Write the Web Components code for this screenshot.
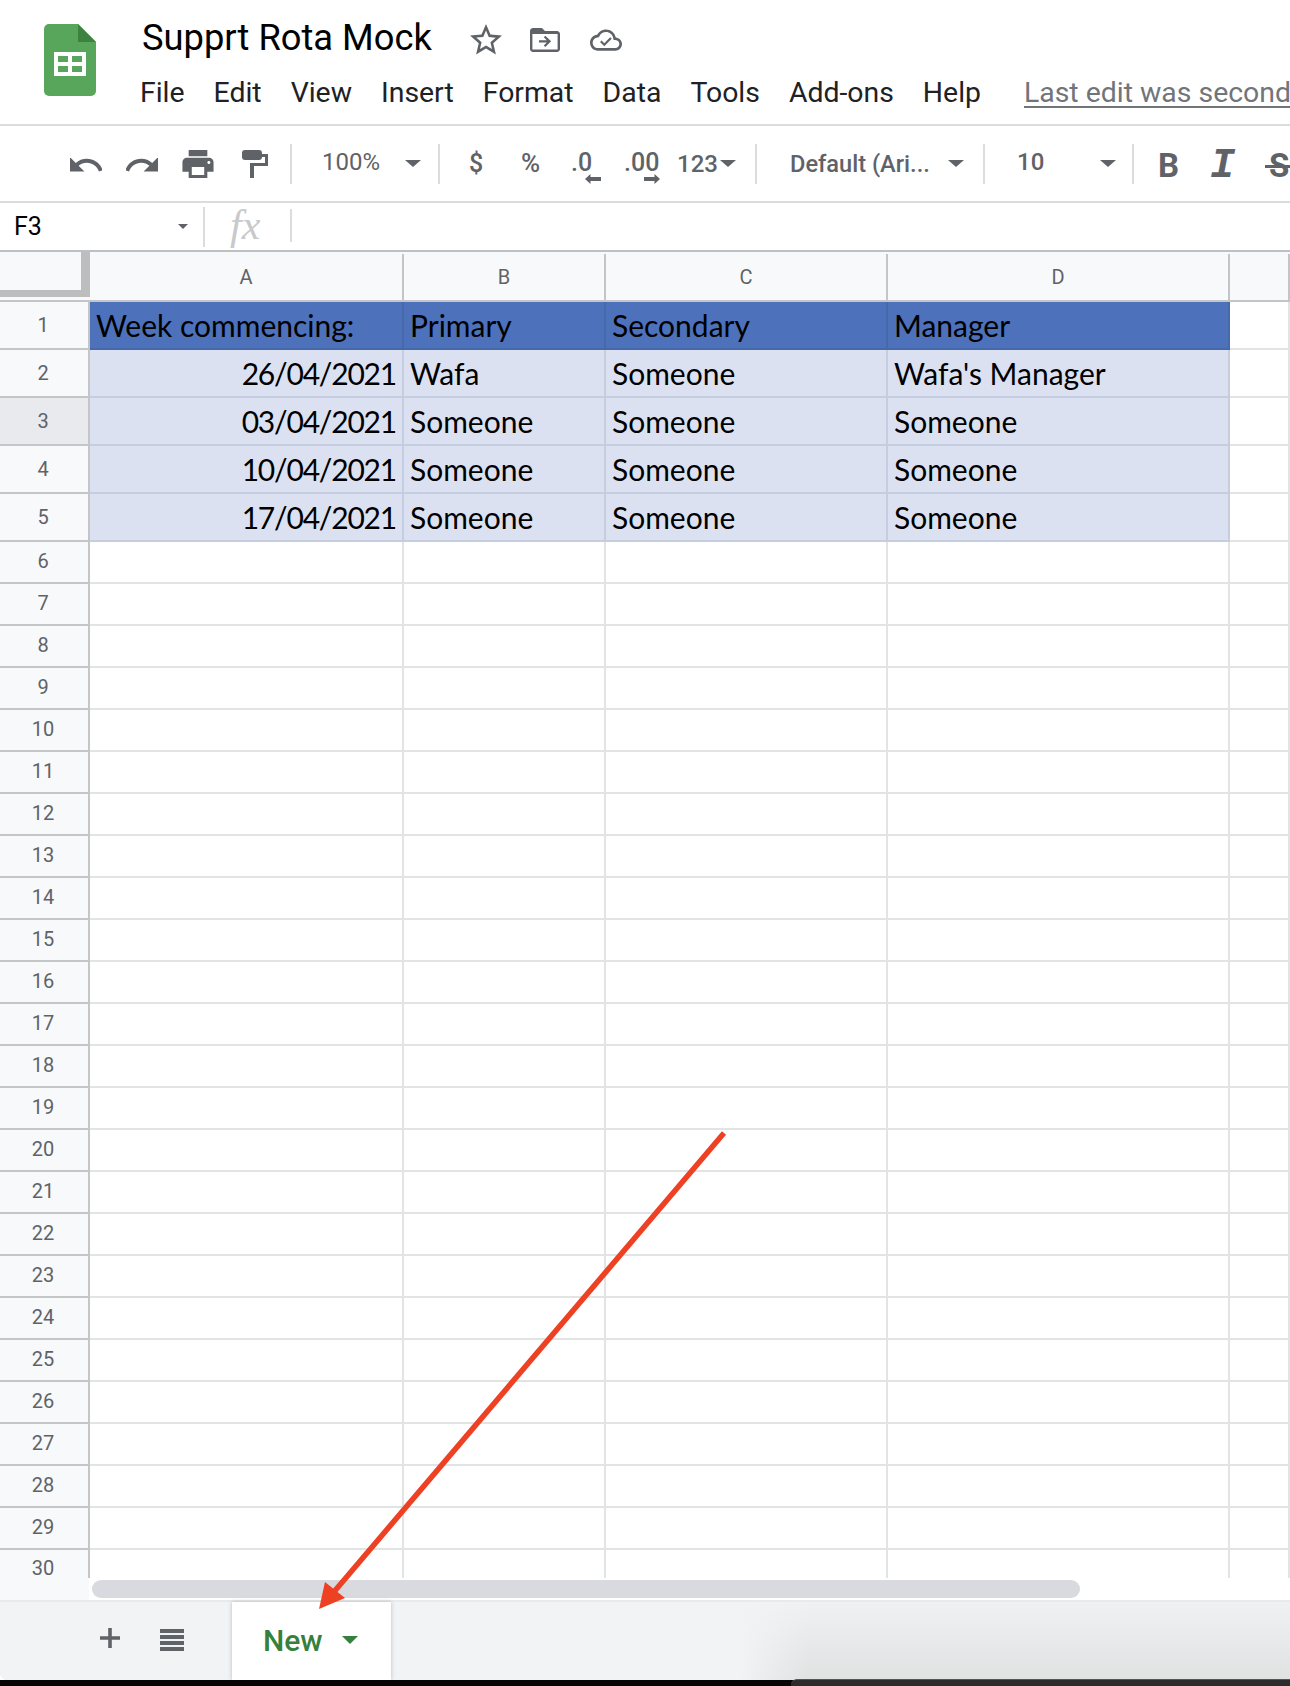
<!doctype html>
<html><head><meta charset="utf-8"><style>
html,body{margin:0;padding:0;background:#000}
body{font-family:Roboto,"Liberation Sans",sans-serif}
</style></head><body>
<sheet-app>
  <sheet-header slot="header" title-text="Supprt Rota Mock">
    <menu-item>File</menu-item><menu-item style="margin-left:29px">Edit</menu-item><menu-item style="margin-left:29px">View</menu-item><menu-item style="margin-left:29px">Insert</menu-item><menu-item style="margin-left:29px">Format</menu-item><menu-item style="margin-left:29px">Data</menu-item><menu-item style="margin-left:29px">Tools</menu-item><menu-item style="margin-left:29px">Add-ons</menu-item><menu-item style="margin-left:29px">Help</menu-item>
  </sheet-header>
  <sheet-toolbar slot="toolbar"></sheet-toolbar>
  <sheet-formula slot="formula"></sheet-formula>
  <sheet-grid slot="grid"></sheet-grid>
  <sheet-scroll slot="scroll"></sheet-scroll>
  <sheet-tabs slot="tabs"></sheet-tabs>
  <sheet-arrow slot="overlay"></sheet-arrow>
</sheet-app>
<script>
function def(name,html){customElements.define(name,class extends HTMLElement{constructor(){super();this.attachShadow({mode:'open'}).innerHTML=html}})}

def('sheet-app',`<style>:host{display:flex;flex-direction:column;position:relative;width:1290px;height:1686px;overflow:hidden;background:#fff;color:#000}
.end{height:6px;background:#050505;position:relative;flex:none}
.end i{position:absolute;left:791px;right:0;top:-1px;bottom:0;background:#2a2b2a;border-top:1px solid #555;border-top-left-radius:6px;box-sizing:border-box}</style>
<slot name="header"></slot><slot name="toolbar"></slot><slot name="formula"></slot><slot name="grid"></slot><slot name="scroll"></slot><slot name="tabs"></slot><div class="end"><i></i></div><slot name="overlay"></slot>`);

def('menu-item',`<style>:host{display:block;font-size:28.4px;line-height:32px;color:#202124;white-space:nowrap}</style><slot></slot>`);

customElements.define('sheet-header',class extends HTMLElement{constructor(){super();this.attachShadow({mode:'open'}).innerHTML=`<style>
:host{display:flex;height:124px;border-bottom:2px solid #dadce0;box-sizing:content-box;overflow:hidden;position:relative}
.logo{width:52px;height:72px;margin:24px 0 0 44px;flex:none}
.col{margin-left:44px;flex:1;min-width:0}
.t{display:flex;align-items:center;height:76px;padding-top:0}
h1{margin:0 0 0 2px;font:400 36.3px/44px Roboto,sans-serif;color:#000;white-space:nowrap;width:328px;flex:none}
.t svg{display:block;flex:none;fill:#5f6368}
.m{display:flex;align-items:center;margin-top:1px;white-space:nowrap}
.last{margin-left:43px;font-size:28.4px;line-height:32px;color:#70757a;text-decoration:underline;text-decoration-thickness:2px;text-underline-offset:4px}
</style>
<svg class="logo" viewBox="0 0 52 72"><path d="M5 0H34L52 18V67a5 5 0 0 1-5 5H5a5 5 0 0 1-5-5V5a5 5 0 0 1 5-5z" fill="#58a55c"/><path d="M34 0L52 18H34z" fill="#3e8241"/><path d="M10 28H42V52H10z" fill="#fff"/><path d="M14 32H24V38H14zM28 32H38V38H28zM14 42H24V48H14zM28 42H38V48H28z" fill="#58a55c"/></svg>
<div class="col"><div class="t"><h1>${this.getAttribute('title-text')}</h1>
<svg width="32" height="32" viewBox="2 2 20 20" style="margin-top:4px"><path d="M22 9.24l-7.19-.62L12 2 9.19 8.63 2 9.24l5.46 4.73L5.82 21 12 17.27 18.18 21l-1.63-7.03L22 9.24zM12 15.4l-3.76 2.27 1-4.28-3.32-2.88 4.38-.38L12 6.1l1.71 4.04 4.38.38-3.32 2.88 1 4.28L12 15.4z"/></svg>
<svg width="30" height="24" viewBox="2 4 20 16" style="margin:4px 0 0 28px"><path d="M20 6h-8l-2-2H4c-1.1 0-2 .9-2 2v12c0 1.1.9 2 2 2h16c1.1 0 2-.9 2-2V8c0-1.1-.9-2-2-2zm0 12.4H3.6V8h16.8v10.4z"/><path d="M12.2 9.2l-1 1 2 2H8v1.5h5.2l-2 2 1 1 3.9-3.8z"/></svg>
<svg width="32" height="24" viewBox="0 3.9 24 16.1" style="margin:4px 0 0 30px"><path d="M19.35 10.04C18.67 6.59 15.64 4 12 4 9.11 4 6.6 5.64 5.35 8.04 2.34 8.36 0 10.91 0 14c0 3.31 2.69 6 6 6h13c2.76 0 5-2.24 5-5 0-2.64-2.05-4.78-4.65-4.96zM19 18H6c-2.21 0-4-1.79-4-4 0-2.05 1.53-3.76 3.56-3.97l1.07-.11.5-.95C8.08 7.14 9.94 6 12 6c2.62 0 4.88 1.86 5.39 4.43l.3 1.5 1.53.11c1.56.1 2.78 1.41 2.78 2.96 0 1.65-1.35 3-3 3z"/><path d="M10.7 14.3l-2-2-1.2 1.2 3.2 3.2 5.6-5.6-1.2-1.2z"/></svg></div>
<div class="m"><slot></slot><span class="last">Last edit was seconds ago</span></div></div>`}});

const caret=(w,h,c='#5f6368',st='')=>`<svg width="${w}" height="${h}" viewBox="0 0 16 8" preserveAspectRatio="none" style="display:block;flex:none;${st}"><path d="M0 0H16L8 8z" fill="${c}"/></svg>`;
const sep=(ml,mr=0)=>`<i class="sep" style="margin-left:${ml}px;margin-right:${mr}px"></i>`;

def('sheet-toolbar',`<style>:host{display:flex;align-items:center;height:75px;border-bottom:2px solid #dadce0;padding-left:70px;overflow:hidden;color:#5f6368;font-size:24px;white-space:nowrap}
svg{fill:#5f6368;display:block;flex:none}
.sep{display:block;flex:none;width:2px;height:40px;background:#dadce0}
span{display:block;flex:none;line-height:30px;font-family:Roboto,sans-serif}
.dec{position:relative;line-height:30px;height:30px;top:-1px;font-size:25px}
.dec svg{position:absolute;top:26px}
.b{font-weight:700;font-size:33px;line-height:38px;margin-top:4px}
.i{font:italic 700 42px/38px "Liberation Mono",monospace;margin-top:4px}
.s{font-weight:700;font-size:33px;line-height:38px;position:relative;margin-top:4px}
.s::after{content:"";position:absolute;left:-4px;width:28px;top:18px;height:3px;background:#5f6368}
</style>
<svg width="32" height="14" viewBox="2 7.6 20 8.6" style="margin-top:2px"><path d="M12.5 8c-2.65 0-5.05.99-6.9 2.6L2 7v9h9l-3.62-3.62c1.39-1.16 3.16-1.88 5.12-1.88 3.54 0 6.55 2.31 7.6 5.5l2.37-.78C21.08 11.03 17.15 8 12.5 8z"/></svg>
<svg width="32" height="14" viewBox="2 7.6 20 8.6" style="margin:2px 0 0 24px"><path d="M18.4 10.6C16.55 8.99 14.15 8 11.5 8c-4.65 0-8.58 3.03-9.96 7.22L3.9 16c1.05-3.19 4.05-5.5 7.6-5.5 1.95 0 3.73.72 5.12 1.88L13 16h9V7l-3.6 3.6z"/></svg>
<svg width="32" height="28" viewBox="2 3 20 18" style="margin-left:24px"><path d="M19 8H5c-1.66 0-3 1.34-3 3v6h4v4h12v-4h4v-6c0-1.66-1.34-3-3-3zm-3 11H8v-5h8v5zm3-7c-.55 0-1-.45-1-1s.45-1 1-1 1 .45 1 1-.45 1-1 1zm-1-9H6v4h12V3z"/></svg>
<svg width="26" height="28" viewBox="0 0 26 28" style="margin-left:28px"><rect x="0" y="0" width="20" height="10" rx="3"/><path d="M20 4H26V16H12V28H8V13H23V7H20z"/></svg>
${sep(22)}
<span style="margin-left:30px;width:83px;margin-top:-3px">100%</span>${caret(16,7)}${sep(17)}
<span style="margin-left:29px;width:52px;font-weight:500;margin-top:1px;font-size:25px">$</span>
<span style="width:50px;font-weight:500;font-size:26px;margin-top:-1px">%</span>
<span class="dec" style="width:53px;font-weight:500">.0<svg width="16" height="10" viewBox="0 0 16 10" style="left:14px"><path d="M5.5 0V3H16V7H5.5V10L0 5z"/></svg></span>
<span class="dec" style="width:53px;font-weight:500">.00<svg width="16" height="10" viewBox="0 0 16 10" style="left:20px"><path d="M10.5 0V3H0V7H10.5V10L16 5z"/></svg></span>
<span style="width:43px;font-weight:500">123</span>${caret(16,7)}${sep(19)}
<span style="margin-left:33px;width:158px;font-weight:500;font-size:23.6px">Default (Ari...</span>${caret(16,7)}${sep(19)}
<span style="margin-left:32px;width:83px;margin-top:-3px;font-weight:500">10</span>${caret(16,7)}${sep(16)}
<span class="b" style="margin-left:24px;width:54px">B</span>
<span class="i" style="margin-left:-2px;width:59px">I</span>
<span class="s">S</span>`);

def('sheet-formula',`<style>:host{display:flex;align-items:center;height:47px;border-bottom:2px solid #bdc1c6}
.n{margin-left:14px;width:164px;font-size:25px;line-height:30px;color:#000;margin-top:1px}
.sep{display:block;flex:none;width:2px;background:#dadce0}
.fx{margin-left:25px;width:60px;font:italic 42px/46px "Liberation Serif",serif;color:#c8c9cb;margin-top:-3px}
</style><div class="n">F3</div>${caret(10,5)}<i class="sep" style="height:40px;margin-left:15px"></i><div class="fx">fx</div><i class="sep" style="height:33px;margin-top:-2px"></i>`);

def('grid-cell',`<style>
:host{display:flex;align-items:center;box-sizing:border-box;min-width:0;overflow:hidden;background:#fff;border-right:2px solid #e2e3e3;border-bottom:2px solid #e2e3e3;white-space:nowrap}
:host(.h){background-color:#f8f9fa;color:#5f6368;font:400 20px/24px Roboto,sans-serif;justify-content:center;border-color:#c4c5c6;padding:0 2px 0 0}
:host(.low){padding-bottom:2px}
:host(.last){padding-bottom:5px;line-height:18px}
:host(.colh){border-right:0;padding:2px 2px 0 0;background-image:linear-gradient(#c4c5c6,#c4c5c6);background-repeat:no-repeat;background-position:right bottom;background-size:2px calc(100% - 2px)}
:host(.sel){background-color:#e8eaed}
:host(.corner){border:0;background:linear-gradient(#c4c5c6,#c4c5c6) left bottom/100% 2px no-repeat,linear-gradient(#bdbdbd,#bdbdbd) right top/9px 45px no-repeat,linear-gradient(#bdbdbd,#bdbdbd) left 38px/100% 7px no-repeat,#f8f9fa}
:host(.head),:host(.body){font:400 30px/36px Lato,"Open Sans",sans-serif;color:#000;padding:0 6px;border-color:#c5cde0}
:host(.head){background:#4e71bb;border-color:#466aa9}
:host(.body){background:#dce1f1}
:host(.num){justify-content:flex-end;letter-spacing:-1.2px}
</style><slot></slot>`);

customElements.define('sheet-grid',class extends HTMLElement{constructor(){super();const r=this.attachShadow({mode:'open'});
let rows=[48,48,48,48,48];for(let i=0;i<25;i++)rows.push(42);
const data=[['Week commencing:','Primary','Secondary','Manager'],['26/04/2021','Wafa','Someone',"Wafa's Manager"],['03/04/2021','Someone','Someone','Someone'],['10/04/2021','Someone','Someone','Someone'],['17/04/2021','Someone','Someone','Someone']];
let h=`<style>:host{display:block;height:1326px;overflow:hidden;background:#fff;flex:none}
.g{display:grid;grid-template-columns:90px 314px 202px 282px 342px 60px;grid-template-rows:50px ${rows.join('px ')}px}</style><div class="g"><grid-cell class="corner"></grid-cell>`;
['A','B','C','D',''].forEach(c=>h+=`<grid-cell class="h colh">${c}</grid-cell>`);
rows.forEach((_,i)=>{h+=`<grid-cell class="h${i==2?' sel':''}${i>=5?' low':''}${i==29?' last':''}">${i+1}</grid-cell>`;
for(let c=0;c<5;c++){const v=i<5&&c<4?data[i][c]:'';const cl=i==0&&c<4?'head':i<5&&c<4?'body':'';h+=`<grid-cell class="${cl}${i>0&&i<5&&c==0?' num':''}">${v}</grid-cell>`}});
r.innerHTML=h+'</div>'}});

def('sheet-scroll',`<style>:host{display:flex;height:22px;flex:none;background:#fff;align-items:flex-start}
.l{width:89px;height:22px;background:#f8f9fa;flex:none}
.b{height:18px;width:988px;margin:2px 0 0 3px;background:#d9dadf;border-radius:9px}</style><div class="l"></div><div class="b"></div>`);

def('sheet-tabs',`<style>:host{display:flex;height:80px;flex:none;box-sizing:border-box;border-top:2px solid #e8eaed;border-bottom-left-radius:8px;background:linear-gradient(to right,#f1f3f4 740px,rgba(241,243,244,0) 810px),linear-gradient(180deg,#f0f1f3 0,#e0e1e1 100%);align-items:center;position:relative}
svg{display:block;flex:none}
.tab{margin-left:48px;width:159px;height:78px;background:#fff;box-shadow:0 0 4px rgba(60,64,67,.3);display:flex;align-items:center;padding:0 0 2px 31px;box-sizing:border-box;color:#36803d;font:500 30px Roboto,sans-serif}
.tab span{width:79px;display:block}
</style>
<svg width="20" height="20" viewBox="0 0 20 20" style="margin-left:100px;margin-top:-6px"><path d="M8.2 0h3.6v8.2H20v3.6h-8.2V20H8.2v-8.2H0V8.2h8.2z" fill="#5f6368"/></svg>
<svg width="24" height="22" viewBox="0 0 24 22" style="margin-left:40px;margin-top:-3px"><path d="M0 0h24v4H0zM0 6h24v4H0zM0 12h24v4H0zM0 18h24v4H0z" fill="#5f6368"/></svg>
<div class="tab"><span>New</span>${caret(16,8,'#36803d')}</div>`);

def('sheet-arrow',`<style>:host{position:absolute;left:0;top:0;width:1290px;height:1686px;pointer-events:none}svg{display:block}</style>
<svg width="1290" height="1686" viewBox="0 0 1290 1686"><path d="M724 1133L333 1593" stroke="#ee4123" stroke-width="5.5" fill="none"/><path d="M319 1609L325 1582L345 1598z" fill="#ee4123"/></svg>`);
</script>
</body></html>
